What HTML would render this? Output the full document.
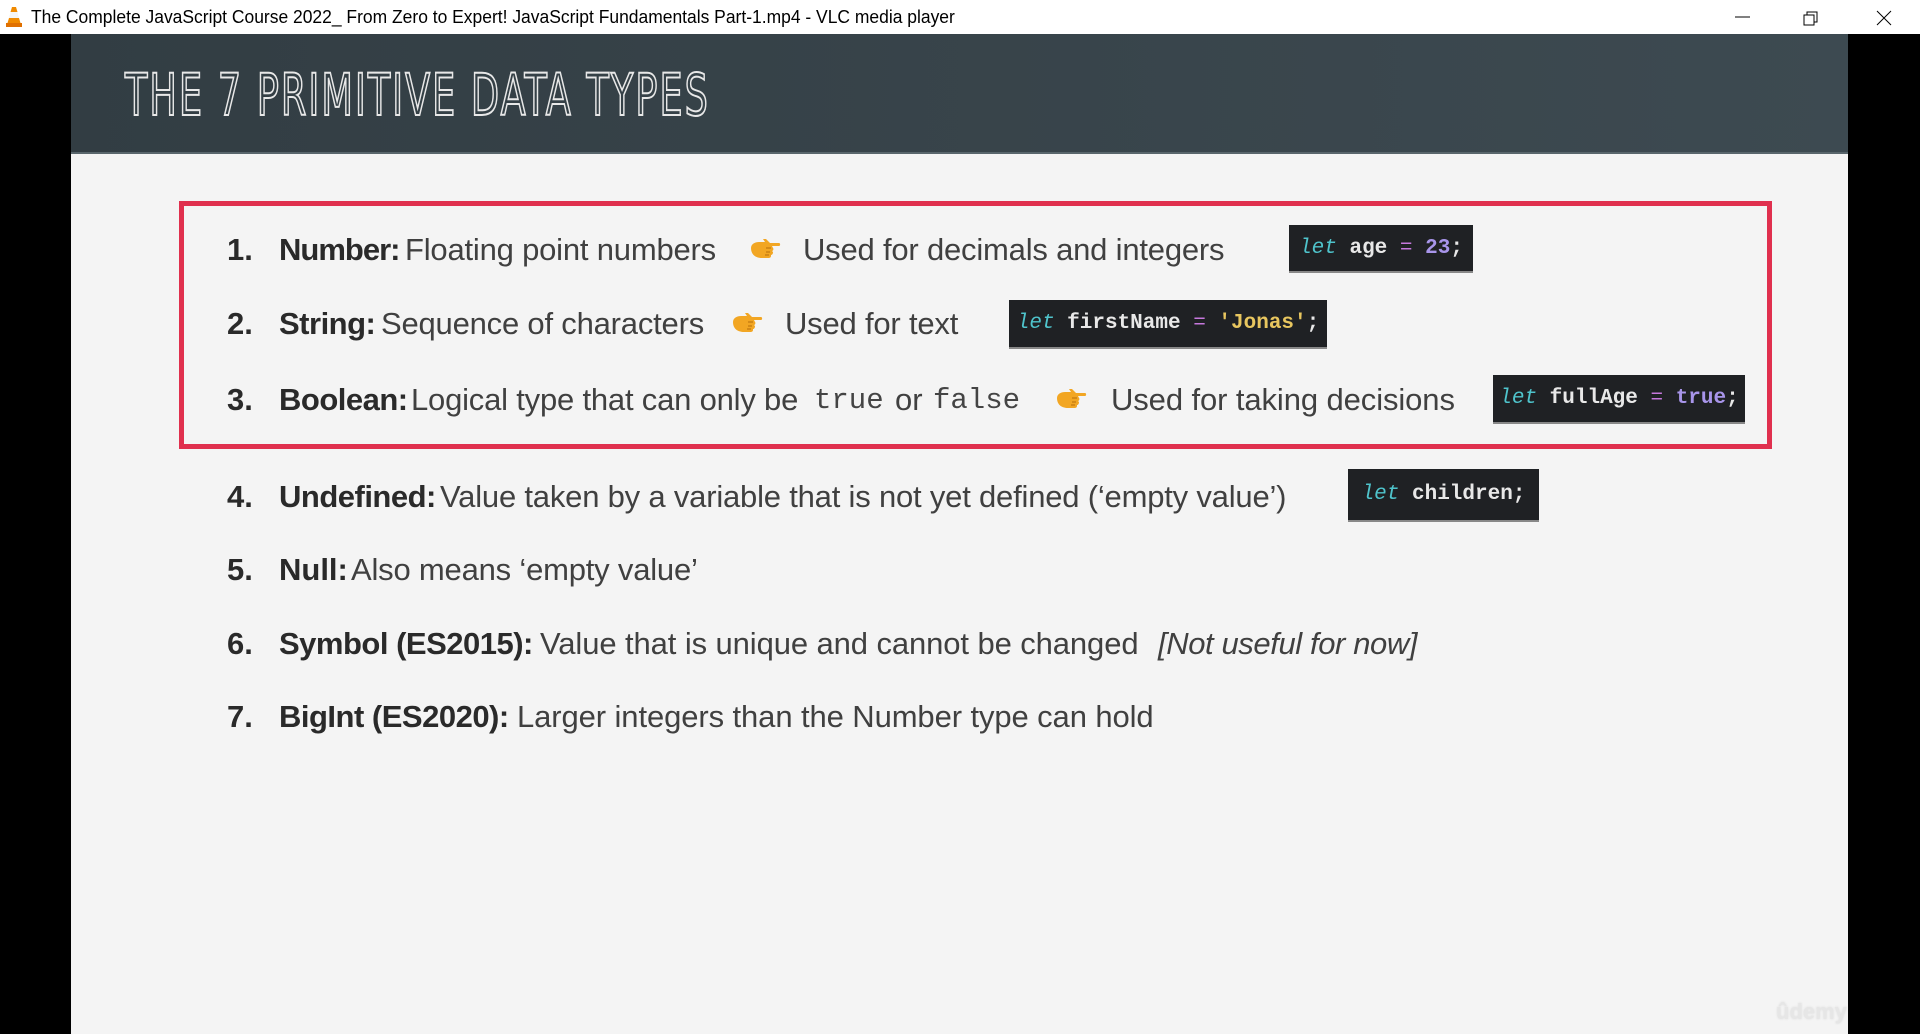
<!DOCTYPE html>
<html><head><meta charset="utf-8"><style>
*{margin:0;padding:0;box-sizing:border-box}
body{width:1920px;height:1034px;background:#000;position:relative;overflow:hidden;font-family:"Liberation Sans",sans-serif}
.tb{position:absolute;left:0;top:0;width:1920px;height:34px;background:#fff}
.tb .t{position:absolute;left:31px;top:7px;font-size:18px;color:#000;white-space:nowrap;transform:scaleX(.97);transform-origin:left}
.slide{position:absolute;left:71px;top:34px;width:1777px;height:1000px;background:#f4f4f4}
.hdr{position:absolute;left:0;top:0;width:1777px;height:120px;background:linear-gradient(90deg,#323d43,#3d4a51);border-bottom:2px solid #59666c}
.ttl{position:absolute;left:54px;top:27px;font-family:"DejaVu Sans Condensed","Liberation Sans Narrow",sans-serif;font-size:58px;color:transparent;-webkit-text-stroke:2px #e8e8e8;letter-spacing:3px;transform:scaleX(.70);transform-origin:left;white-space:nowrap}
.box{position:absolute;left:108px;top:167px;width:1593px;height:248px;border:5px solid #e0304e}
.s{position:absolute;font-size:31px;color:#404040;white-space:nowrap;line-height:1}
.b{font-weight:bold;color:#2a2a2a}
.m{font-family:"Liberation Mono",monospace;color:#444}
.code{position:absolute;background:#1f2124;font-family:"Liberation Mono",monospace;font-size:21px;font-weight:bold;color:#e8e8e8;display:flex;align-items:center;justify-content:center;border-bottom:2px solid #888}
.code>span{white-space:pre}
.k{color:#4fc4cc;font-style:italic;font-weight:normal}
.o{color:#c678dd;font-weight:normal}
.n{color:#a895ea}
.y{color:#e8c65f}
.hand{position:absolute;width:32px;height:22px}
.ud{position:absolute;left:1776px;top:999px;font-size:22px;font-weight:bold;color:#e6e6e6;text-shadow:0 0 2px #ddd}
</style></head><body>
<div class="tb">
<svg style="position:absolute;left:5px;top:6px" width="18" height="22" viewBox="0 0 18 22"><path d="M7 1h4l1.5 5h-7z" fill="#f08a00"/><path d="M5.5 6h7l1.5 6h-10z" fill="#f4f4f4"/><path d="M4 12h10l1.5 5h-13z" fill="#f08a00"/><rect x="1" y="17" width="16" height="4" fill="#e07000"/></svg>
<div class="t">The Complete JavaScript Course 2022_ From Zero to Expert! JavaScript Fundamentals Part-1.mp4 - VLC media player</div>
<svg style="position:absolute;left:1735px;top:10px" width="180" height="18"><line x1="0" y1="7" x2="15" y2="7" stroke="#000"/><rect x="69" y="5" width="10" height="10" fill="none" stroke="#000"/><path d="M72 5V2h10v10h-3" fill="none" stroke="#000"/><path d="M142 1l14 14M156 1l-14 14" stroke="#000"/></svg>
</div>
<div class="slide">
<div class="hdr"><div class="ttl">THE 7 PRIMITIVE DATA TYPES</div></div>
<div class="box"></div>
</div>
<svg width="0" height="0" style="position:absolute"><defs><symbol id="h" viewBox="0 0 32 22"><path d="M2 10c0-4 4-6 8-6h6l-2-3h3l4 4h9c1.5 0 1.5 3 0 3h-7l1 2c1 1 0 3-1 3l1 1c0 2-1 3-2 3l0 1c0 2-2 2-3 2h-6c-6 0-11-3-11-10z" fill="#f2a623"/><path d="M17 10h5M17 14h4M16 17h4" stroke="#c27a10" stroke-width="1.2"/></symbol></defs></svg>

<div class="s b" style="left:227px;top:234px">1.</div>
<div class="s b" style="left:279px;top:234px;letter-spacing:-1px">Number:</div>
<div class="s" style="left:405px;top:234px;letter-spacing:-.2px">Floating point numbers</div>
<svg class="hand" style="left:749px;top:238px"><use href="#h"/></svg>
<div class="s" style="left:803px;top:234px;letter-spacing:-.2px">Used for decimals and integers</div>
<div class="code" style="left:1289px;top:225px;width:184px;height:48px"><span><span class="k">let</span> age <span class="o">=</span> <span class="n">23</span>;</span></div>

<div class="s b" style="left:227px;top:308px">2.</div>
<div class="s b" style="left:279px;top:308px;letter-spacing:-.5px">String:</div>
<div class="s" style="left:381px;top:308px;letter-spacing:-.2px">Sequence of characters</div>
<svg class="hand" style="left:731px;top:312px"><use href="#h"/></svg>
<div class="s" style="left:785px;top:308px;letter-spacing:-.2px">Used for text</div>
<div class="code" style="left:1009px;top:300px;width:318px;height:49px"><span><span class="k">let</span> firstName <span class="o">=</span> <span class="y">'Jonas'</span>;</span></div>

<div class="s b" style="left:227px;top:384px">3.</div>
<div class="s b" style="left:279px;top:384px;letter-spacing:-.5px">Boolean:</div>
<div class="s" style="left:411px;top:384px;letter-spacing:-.2px">Logical type that can only be</div>
<div class="s m" style="left:814px;top:386px;font-size:29px">true</div>
<div class="s" style="left:895px;top:384px">or</div>
<div class="s m" style="left:933px;top:386px;font-size:29px">false</div>
<svg class="hand" style="left:1055px;top:388px"><use href="#h"/></svg>
<div class="s" style="left:1111px;top:384px;letter-spacing:-.1px">Used for taking decisions</div>
<div class="code" style="left:1493px;top:375px;width:252px;height:49px"><span><span class="k">let</span> fullAge <span class="o">=</span> <span class="n">true</span>;</span></div>

<div class="s b" style="left:227px;top:481px">4.</div>
<div class="s b" style="left:279px;top:481px;letter-spacing:-.5px">Undefined:</div>
<div class="s" style="left:440px;top:481px;letter-spacing:-.2px">Value taken by a variable that is not yet defined (‘empty value’)</div>
<div class="code" style="left:1348px;top:469px;width:191px;height:53px"><span><span class="k">let</span> children;</span></div>

<div class="s b" style="left:227px;top:554px">5.</div>
<div class="s b" style="left:279px;top:554px">Null:</div>
<div class="s" style="left:351px;top:554px;letter-spacing:-.2px">Also means ‘empty value’</div>

<div class="s b" style="left:227px;top:628px">6.</div>
<div class="s b" style="left:279px;top:628px;letter-spacing:-.5px">Symbol (ES2015):</div>
<div class="s" style="left:540px;top:628px;letter-spacing:-.1px">Value that is unique and cannot be changed</div>
<div class="s" style="left:1158px;top:628px;font-style:italic;letter-spacing:-.4px">[Not useful for now]</div>

<div class="s b" style="left:227px;top:701px">7.</div>
<div class="s b" style="left:279px;top:701px;letter-spacing:-.5px">BigInt (ES2020):</div>
<div class="s" style="left:517px;top:701px;letter-spacing:-.1px">Larger integers than the Number type can hold</div>

<div class="ud">ûdemy</div>
</body></html>
